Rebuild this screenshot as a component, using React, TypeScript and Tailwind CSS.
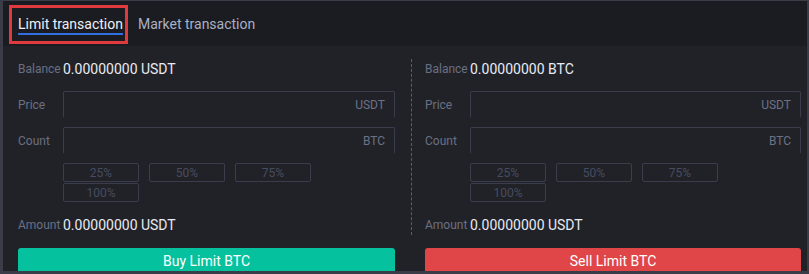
const percents = ['25%', '50%', '75%', '100%'];

function Field({ label, unit }: { label: string; unit: string }) {
  return (
    <div className="flex items-center h-[27px]">
      <span className="w-[45px] text-[12px] text-[#697084]">{label}</span>
      <div className="flex-1 h-full flex items-center justify-end pr-[9px] border border-[#3a3d4c] border-b-transparent rounded-[2px] text-[12px] text-[#6b7286]">
        {unit}
      </div>
    </div>
  );
}

function TradeForm({ balance }: { balance: string }) {
  return (
    <div className="flex flex-col">
      <div className="flex items-center h-[20px]">
        <span className="w-[45px] text-[12px] text-[#697084]">Balance</span>
        <span className="text-[14px] text-[#e8eaf2]">{balance}</span>
      </div>
      <div className="mt-[12px]">
        <Field label="Price" unit="USDT" />
      </div>
      <div className="mt-[9px]">
        <Field label="Count" unit="BTC" />
      </div>
      <div className="mt-[9px] pl-[45px] flex flex-wrap gap-y-[1px]">
        {percents.map((p) => (
          <div
            key={p}
            className="w-[76px] h-[19px] mr-[10px] flex items-center justify-center border border-[#3a3d4c] rounded-[2px] text-[12px] text-[#474c5f]"
          >
            {p}
          </div>
        ))}
      </div>
      <div className="mt-[13px] flex items-center h-[20px]">
        <span className="w-[45px] text-[12px] text-[#697084]">Amount</span>
        <span className="text-[14px] text-[#e8eaf2]">0.00000000 USDT</span>
      </div>
    </div>
  );
}

export default function App() {
  return (
    <div
      className="w-[809px] h-[274px] bg-[#3a3d47] pl-[3px] pr-[2px] pt-[1px] pb-[3px]"
      style={{ fontFamily: 'Roboto, "Noto Sans", sans-serif' }}
    >
      <div className="h-full bg-[#212228] flex flex-col overflow-hidden">
        <div className="h-[45px] shrink-0 bg-[#1b1c21] flex items-start pl-[6px] pt-[4px]">
          <div className="h-[39px] border-[3px] border-[#e0393e] pl-[6px] pr-[2px] flex items-center">
            <div className="relative h-full flex items-center">
              <span className="text-[14px] text-[#eef0f6]">Limit transaction</span>
              <div className="absolute left-0 right-0 bottom-[6px] h-[2px] bg-[#2f6fe0]" />
            </div>
          </div>
          <div className="h-[39px] ml-[10px] flex items-center">
            <span className="text-[14px] text-[#a9b0c4]">Market transaction</span>
          </div>
        </div>

        <div className="flex pt-[13px]">
          <div className="w-[392px] pl-[15px] flex flex-col">
            <TradeForm balance="0.00000000 USDT" />
            <div className="mt-[13px] h-[26px] bg-[#06c19e] rounded-t-[3px] flex items-center justify-center text-[14px] text-white">
              Buy Limit BTC
            </div>
          </div>
          <div className="ml-[16px] w-[390px] flex flex-col">
            <div className="border-l border-dashed border-[#5a5e6c] pl-[13px]">
              <TradeForm balance="0.00000000 BTC" />
            </div>
            <div className="ml-[14px] mt-[13px] h-[26px] bg-[#e04647] rounded-t-[3px] flex items-center justify-center text-[14px] text-white">
              Sell Limit BTC
            </div>
          </div>
        </div>
      </div>
    </div>
  );
}
